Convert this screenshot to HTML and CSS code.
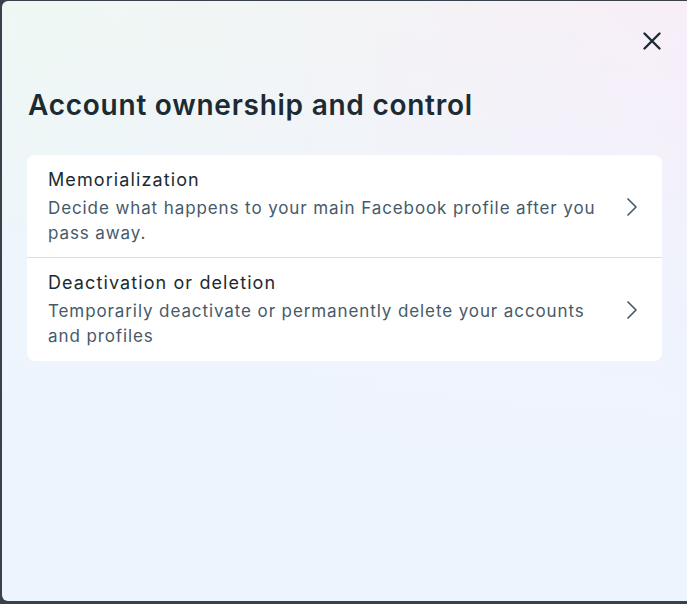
FILE: index.html
```html
<!DOCTYPE html>
<html lang="en">
<head>
    <meta charset="UTF-8">
    <meta name="viewport" content="width=device-width, initial-scale=1.0">
    <title>Account ownership and control</title>
    <link rel="stylesheet" href="styles.css">
</head>
<body>
    <div class="dialog">
        <div class="dialog-top">
            <button class="close-btn" aria-label="Close">
                <svg width="18" height="18" viewBox="0 0 18 18">
                    <path d="M1.5 1.5 L16.5 16.5 M16.5 1.5 L1.5 16.5" stroke="#1c2b33" stroke-width="2.4" stroke-linecap="round" fill="none"/>
                </svg>
            </button>
        </div>
        <h1 class="dialog-title">Account ownership and control</h1>
        <div class="card">
            <a class="item" href="#">
                <div class="item-text">
                    <div class="item-title">Memorialization</div>
                    <div class="item-desc">Decide what happens to your main Facebook profile after you pass away.</div>
                </div>
                <svg class="chevron" width="20" height="20" viewBox="0 0 20 20">
                    <path d="M6 2 L14 10 L6 18" stroke="#465a69" stroke-width="1.7" stroke-linecap="round" stroke-linejoin="round" fill="none"/>
                </svg>
            </a>
            <a class="item" href="#">
                <div class="item-text">
                    <div class="item-title">Deactivation or deletion</div>
                    <div class="item-desc">Temporarily deactivate or permanently delete your accounts and profiles</div>
                </div>
                <svg class="chevron" width="20" height="20" viewBox="0 0 20 20">
                    <path d="M6 2 L14 10 L6 18" stroke="#465a69" stroke-width="1.7" stroke-linecap="round" stroke-linejoin="round" fill="none"/>
                </svg>
            </a>
        </div>
    </div>
</body>
</html>
```
FILE: styles.css
```css
body {
    margin: 0;
    height: 604px;
    overflow: hidden;
    background: #39424b;
    font-family: 'Inter', 'Noto Sans', sans-serif;
}
.dialog {
    box-sizing: border-box;
    margin: 1px 0 0 2px;
    width: 685px;
    height: 600px;
    padding: 0 25px;
    border-radius: 6px 0 0 6px;
    background:
        linear-gradient(to bottom, rgba(238, 244, 254, 0) 0%, rgba(238, 244, 254, 0.7) 40%, #eef4fe 75%),
        linear-gradient(to right, #eef8f3 0%, #f3f4f5 50%, #f8eef8 100%);
}
.dialog-top {
    display: flex;
    justify-content: flex-end;
    padding-top: 22px;
}
.close-btn {
    width: 36px;
    height: 36px;
    margin-right: -8px;
    padding: 0;
    border: none;
    background: none;
    display: flex;
    align-items: center;
    justify-content: center;
    cursor: pointer;
}
.dialog-title {
    margin: 29px 0 33px 1px;
    font-size: 28px;
    line-height: 34px;
    font-weight: 600;
    letter-spacing: 0.75px;
    color: #1c2b33;
}
.card {
    background: #fff;
    border-radius: 8px;
    overflow: hidden;
}
.item {
    display: flex;
    align-items: center;
    gap: 12px;
    padding: 13px 20px 11px 21px;
    text-decoration: none;
}
.item + .item {
    border-top: 1px solid #dddfe2;
    padding-bottom: 12px;
}
.item-text {
    flex: 1;
}
.item-title {
    font-size: 18px;
    line-height: 24px;
    font-weight: 400;
    letter-spacing: 1.1px;
    color: #1c2b33;
}
.item-desc {
    margin-top: 4px;
    font-size: 17px;
    line-height: 25px;
    letter-spacing: 0.9px;
    color: #465a69;
}
.chevron {
    flex-shrink: 0;
}
```
